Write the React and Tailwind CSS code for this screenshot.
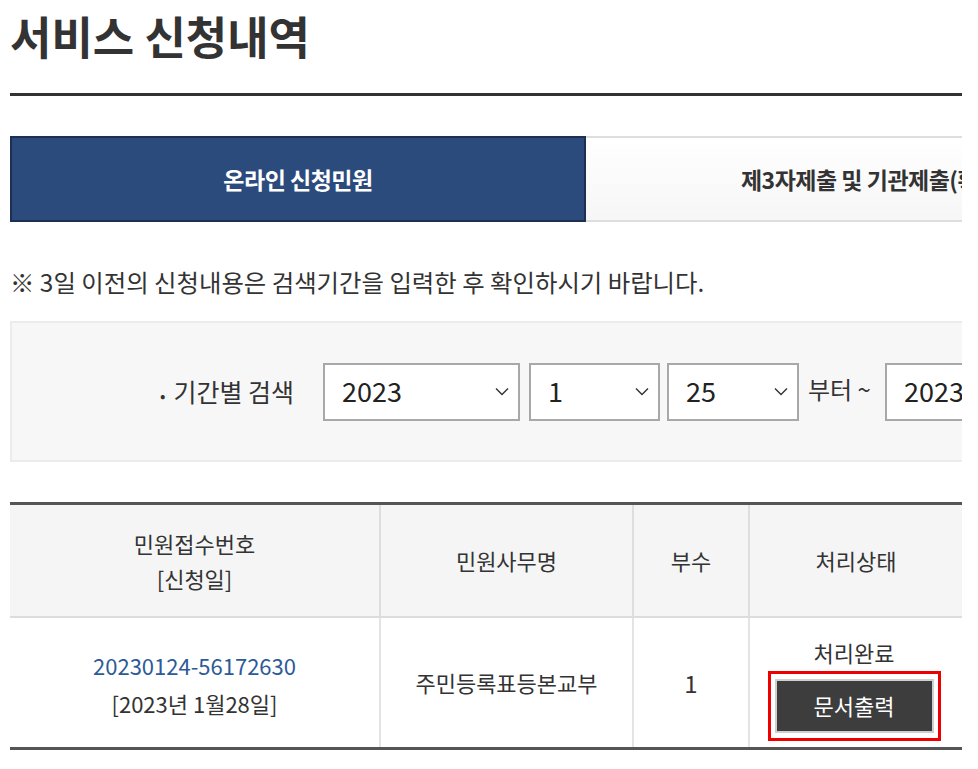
import React from "react";

const FONT = { fontFamily: '"Noto Sans CJK KR", "Noto Sans", sans-serif' };

const Select = ({ value, width }) => (
  <div className={`flex h-[58px] shrink-0 items-center justify-between border-2 border-[#a8a8a8] bg-white pl-[17px] pr-[9px] ${width}`}>
    <span className="text-[27px] text-[#222]">{value}</span>
    <svg width="14" height="9" viewBox="0 0 14 9" fill="none" stroke="#333" strokeWidth="1.4">
      <path d="M1 1.5 L7 7.5 L13 1.5" />
    </svg>
  </div>
);

export default function App() {
  return (
    <div className="min-h-[769px] w-[978px] bg-white" style={FONT}>
      <div className="ml-[10px] w-[952px] overflow-hidden">
        <h1 className="pt-[10px] text-[45px] font-bold leading-[52px] text-[#333]">
          서비스 신청내역
        </h1>
        <div className="mt-[31px] h-[3px] bg-[#333]" />

        {/* tabs */}
        <div className="mt-[40px] flex w-[1152px]">
          <div className="flex h-[86px] w-[576px] items-center justify-center border-2 border-[#1d3052] bg-[#2b4b7d] text-[23px] font-bold tracking-[-0.5px] text-white">
            온라인 신청민원
          </div>
          <div className="flex h-[86px] w-[576px] items-center justify-center border-y-2 border-[#dedede] bg-gradient-to-b from-white to-[#f6f6f6] text-[23px] font-bold tracking-[-0.5px] text-[#333]">
            제3자제출 및 기관제출(확인)
          </div>
        </div>

        <p className="mt-[44px] text-[24.4px] leading-[32px] text-[#333]">
          ※ 3일 이전의 신청내용은 검색기간을 입력한 후 확인하시기 바랍니다.
        </p>

        {/* search box */}
        <div className="mt-[23px] flex h-[141px] w-[1200px] items-center border-2 border-[#ececec] bg-[#f7f7f8] pl-[148px]">
          <span className="w-[163px] shrink-0 whitespace-nowrap text-[25px] text-[#333]">
            <span className="mr-[8px] text-[16px]">•</span>기간별 검색
          </span>
          <Select value="2023" width="w-[197px]" />
          <div className="w-[9px] shrink-0" />
          <Select value="1" width="w-[131px]" />
          <div className="w-[7px] shrink-0" />
          <Select value="25" width="w-[132px]" />
          <span className="mb-[6px] w-[86px] shrink-0 whitespace-nowrap pl-[9px] text-[24px] text-[#333]">부터 ~</span>
          <Select value="2023" width="w-[197px]" />
        </div>

        {/* table */}
        <div className="mt-[40px] border-t-[3px] border-b-[3px] border-[#555]">
          <div className="flex border-b-2 border-[#dcdcdc] bg-[#f5f5f5] text-[22px] text-[#333]">
            <div className="flex h-[111px] w-[369px] flex-col items-center justify-center leading-[35px]">
              <span>민원접수번호</span>
              <span>[신청일]</span>
            </div>
            <div className="flex w-[253px] items-center justify-center border-l-2 border-[#dedede]">민원사무명</div>
            <div className="flex w-[116px] items-center justify-center border-l-2 border-[#dedede]">부수</div>
            <div className="flex flex-1 items-center justify-center border-l-2 border-[#dedede]">처리상태</div>
          </div>
          <div className="flex text-[22px] text-[#333]">
            <div className="flex h-[129px] w-[369px] flex-col items-center justify-center pt-[2px] leading-[38px]">
              <span className="text-[#2d5a98]">20230124-56172630</span>
              <span>[2023년 1월28일]</span>
            </div>
            <div className="flex w-[253px] items-center justify-center border-l-2 border-[#e4e4e4]">주민등록표등본교부</div>
            <div className="flex w-[116px] items-center justify-center border-l-2 border-[#e4e4e4] text-[24px]">1</div>
            <div className="flex flex-1 flex-col items-center justify-center border-l-2 border-[#e4e4e4] pr-[4px] pt-[12px]">
              <span className="leading-[30px]">처리완료</span>
              <div className="mt-[4px] border-[3px] border-[#e00] px-[4px] py-[5px]">
                <div className="flex h-[54px] w-[159px] items-center justify-center border-2 border-[#cfcfcf] bg-[#3d3d3d] text-[22px] text-white">
                  문서출력
                </div>
              </div>
            </div>
          </div>
        </div>
      </div>
    </div>
  );
}
